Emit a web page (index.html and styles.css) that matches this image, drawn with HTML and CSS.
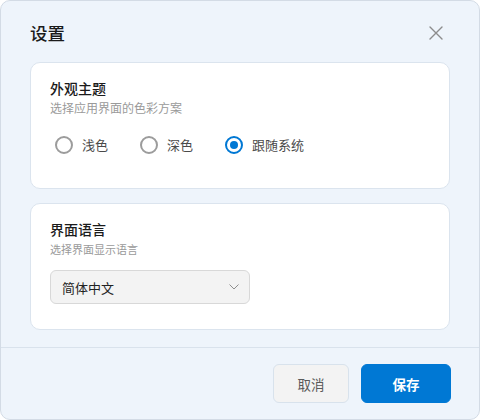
FILE: index.html
```html
<!DOCTYPE html>
<html lang="zh-CN">
<head>
<meta charset="utf-8">
<title>设置</title>
<link rel="stylesheet" href="styles.css">
</head>
<body>
<div class="dialog">
  <div class="header">
    <h1 class="title">设置</h1>
    <button class="close" aria-label="关闭">
      <svg width="14" height="14" viewBox="0 0 14 14"><path d="M1 1 L13 13 M13 1 L1 13" stroke="#8c8c8c" stroke-width="1.4" fill="none" stroke-linecap="round"/></svg>
    </button>
  </div>
  <div class="content">
    <section class="card">
      <div class="card-title">外观主题</div>
      <div class="card-sub">选择应用界面的色彩方案</div>
      <div class="radios">
        <label class="radio"><span class="dot"></span><span class="radio-label">浅色</span></label>
        <label class="radio"><span class="dot"></span><span class="radio-label">深色</span></label>
        <label class="radio checked"><span class="dot"></span><span class="radio-label">跟随系统</span></label>
      </div>
    </section>
    <section class="card">
      <div class="card-title">界面语言</div>
      <div class="card-sub card-sub-sm">选择界面显示语言</div>
      <div class="select">
        <span class="select-text">简体中文</span>
        <svg width="10" height="6" viewBox="0 0 10 6"><path d="M0.5 0.5 L5 5 L9.5 0.5" stroke="#8e8e8e" stroke-width="1" fill="none"/></svg>
      </div>
    </section>
  </div>
  <div class="footer">
    <button class="btn btn-cancel">取消</button>
    <button class="btn btn-save">保存</button>
  </div>
</div>
</body>
</html>
```

FILE: styles.css
```css
* { box-sizing: border-box; }
html, body {
  margin: 0;
  padding: 0;
  background: #ffffff;
  font-family: "Noto Sans CJK SC", "Noto Sans", "Liberation Sans", sans-serif;
}
.dialog {
  width: 480px;
  height: 420px;
  border: 1px solid #d3dbe5;
  border-radius: 10px;
  background: #eef4fb;
  display: flex;
  flex-direction: column;
  overflow: hidden;
}
.header {
  height: 61px;
  padding: 3px 36px 0 29px;
  display: flex;
  align-items: center;
  justify-content: space-between;
}
.title {
  margin: 0;
  font-size: 17.5px;
  font-weight: 500;
  color: #1b1b1b;
  line-height: 24px;
}
.close {
  border: 0;
  background: none;
  padding: 0;
  width: 14px;
  height: 14px;
  display: flex;
}
.content {
  padding: 0 29px;
  display: flex;
  flex-direction: column;
  gap: 14px;
}
.card {
  height: 127px;
  background: #ffffff;
  border: 1px solid #dbe4ee;
  border-radius: 10px;
  padding: 15px 19px 0;
}
.card-title {
  font-size: 14px;
  font-weight: 500;
  line-height: 20px;
  color: #1b1b1b;
}
.card-sub {
  margin-top: 2px;
  font-size: 12px;
  line-height: 16px;
  color: #9a9a9a;
}
.card-sub-sm { font-size: 11px; }
.radios {
  margin-top: 19px;
  padding-left: 5px;
  display: flex;
  gap: 32px;
  height: 20px;
  align-items: center;
}
.radio {
  display: flex;
  align-items: center;
  gap: 9px;
}
.dot {
  width: 18px;
  height: 18px;
  border-radius: 50%;
  border: 2px solid #9c9c9c;
  display: flex;
  align-items: center;
  justify-content: center;
}
.checked .dot { border-color: #0078d4; }
.checked .dot::after {
  content: "";
  width: 8px;
  height: 8px;
  border-radius: 50%;
  background: #0078d4;
}
.radio-label {
  font-size: 13px;
  line-height: 18px;
  color: #4a4a4a;
}
.select {
  margin-top: 13px;
  width: 200px;
  height: 34px;
  background: #f3f3f3;
  border: 1px solid #d8d8d8;
  border-radius: 6px;
  padding: 0 10px 0 11px;
  display: flex;
  align-items: center;
  justify-content: space-between;
}
.select-text {
  font-size: 13px;
  color: #222222;
}
.footer {
  margin-top: auto;
  border-top: 1px solid #d9e2ec;
  padding: 16px 28px 16px;
  display: flex;
  justify-content: flex-end;
  gap: 12px;
}
.btn {
  height: 39px;
  border-radius: 6px;
  font-family: inherit;
  font-size: 13.5px;
  padding: 0;
}
.btn-cancel {
  width: 76px;
  background: #f3f3f3;
  border: 1px solid #d8e2ec;
  color: #5a5a5a;
}
.btn-save {
  width: 90px;
  background: #0078d4;
  border: 1px solid #0078d4;
  color: #ffffff;
  font-weight: 700;
}
```
